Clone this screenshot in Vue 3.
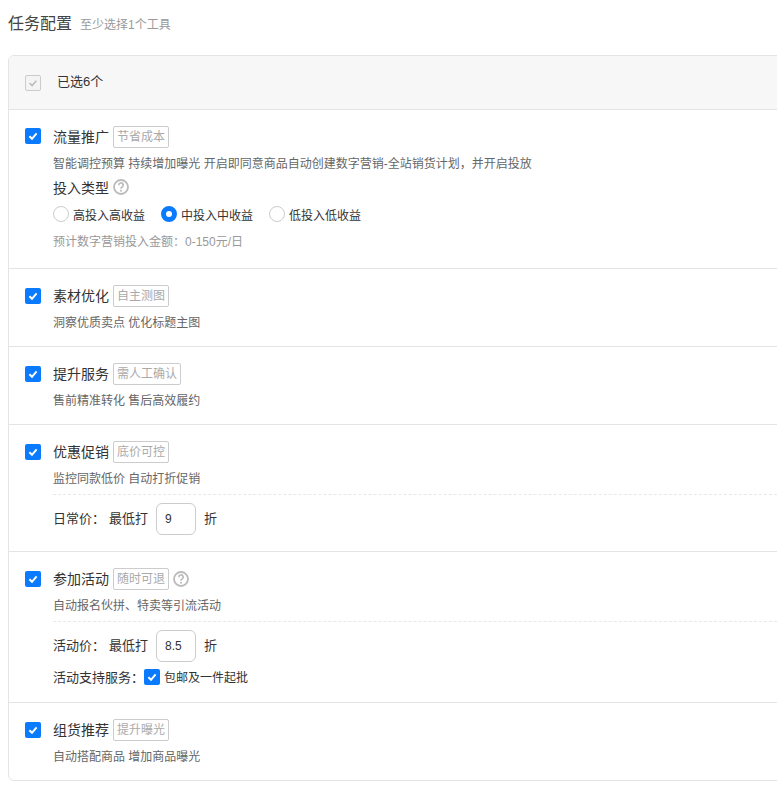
<script setup>
const radios = [
  { label: '高投入高收益', on: false },
  { label: '中投入中收益', on: true },
  { label: '低投入低收益', on: false }
]
</script>

<template>
  <div class="page">
    <div class="title-row">
      <span class="title">任务配置</span>
      <span class="subtitle">至少选择1个工具</span>
    </div>
    <div class="card">
      <div class="head">
        <span class="cb disabled">
          <svg viewBox="0 0 16 16"><path d="M4.2 8.2 7 11l4.8-5.6" fill="none" stroke="#bbb" stroke-width="1.8" /></svg>
        </span>
        <span class="head-text">已选6个</span>
      </div>

      <div class="row r1">
        <span class="cb"><svg viewBox="0 0 16 16"><path d="M4.4 8.2 7 10.8l4.6-5.4" fill="none" stroke="#fff" stroke-width="2" /></svg></span>
        <div class="body">
          <div class="name-line"><span class="name">流量推广</span><span class="tag">节省成本</span></div>
          <div class="desc">智能调控预算 持续增加曝光 开启即同意商品自动创建数字营销-全站销货计划，并开启投放</div>
          <div class="type-line">
            <span class="type">投入类型</span>
            <svg class="help" viewBox="0 0 16 16"><circle cx="8" cy="8" r="7" fill="none" stroke="#bbb" stroke-width="1.8" /><path d="M5.8 6.3A2.2 2.2 0 1 1 9.1 8.1c-.8.4-1.1.8-1.1 1.6" fill="none" stroke="#bbb" stroke-width="1.7" /><circle cx="8" cy="11.8" r="1" fill="#bbb" /></svg>
          </div>
          <div class="radios">
            <span v-for="r in radios" :key="r.label" class="radio-item">
              <span class="radio" :class="{ on: r.on }"></span>{{ r.label }}
            </span>
          </div>
          <div class="estimate">预计数字营销投入金额：0-150元/日</div>
        </div>
      </div>

      <div class="row r2">
        <span class="cb low"><svg viewBox="0 0 16 16"><path d="M4.4 8.2 7 10.8l4.6-5.4" fill="none" stroke="#fff" stroke-width="2" /></svg></span>
        <div class="body">
          <div class="name-line"><span class="name">素材优化</span><span class="tag">自主测图</span></div>
          <div class="desc">洞察优质卖点 优化标题主图</div>
        </div>
      </div>

      <div class="row r2">
        <span class="cb low"><svg viewBox="0 0 16 16"><path d="M4.4 8.2 7 10.8l4.6-5.4" fill="none" stroke="#fff" stroke-width="2" /></svg></span>
        <div class="body">
          <div class="name-line"><span class="name">提升服务</span><span class="tag">需人工确认</span></div>
          <div class="desc">售前精准转化 售后高效履约</div>
        </div>
      </div>

      <div class="row r4">
        <span class="cb low"><svg viewBox="0 0 16 16"><path d="M4.4 8.2 7 10.8l4.6-5.4" fill="none" stroke="#fff" stroke-width="2" /></svg></span>
        <div class="body">
          <div class="name-line"><span class="name">优惠促销</span><span class="tag">底价可控</span></div>
          <div class="desc">监控同款低价 自动打折促销</div>
          <div class="dashed"></div>
          <div class="price-line">
            <span class="price-label">日常价：</span><span class="price-text">最低打</span>
            <span class="input">9</span><span class="price-text">折</span>
          </div>
        </div>
      </div>

      <div class="row r5">
        <span class="cb low"><svg viewBox="0 0 16 16"><path d="M4.4 8.2 7 10.8l4.6-5.4" fill="none" stroke="#fff" stroke-width="2" /></svg></span>
        <div class="body">
          <div class="name-line">
            <span class="name">参加活动</span><span class="tag">随时可退</span>
            <svg class="help" viewBox="0 0 16 16"><circle cx="8" cy="8" r="7" fill="none" stroke="#bbb" stroke-width="1.8" /><path d="M5.8 6.3A2.2 2.2 0 1 1 9.1 8.1c-.8.4-1.1.8-1.1 1.6" fill="none" stroke="#bbb" stroke-width="1.7" /><circle cx="8" cy="11.8" r="1" fill="#bbb" /></svg>
          </div>
          <div class="desc">自动报名伙拼、特卖等引流活动</div>
          <div class="dashed"></div>
          <div class="price-line">
            <span class="price-label">活动价：</span><span class="price-text">最低打</span>
            <span class="input">8.5</span><span class="price-text">折</span>
          </div>
          <div class="service">
            <span class="service-label">活动支持服务：</span>
            <span class="cb"><svg viewBox="0 0 16 16"><path d="M4.4 8.2 7 10.8l4.6-5.4" fill="none" stroke="#fff" stroke-width="2" /></svg></span>
            <span class="service-text">包邮及一件起批</span>
          </div>
        </div>
      </div>

      <div class="row last">
        <span class="cb low"><svg viewBox="0 0 16 16"><path d="M4.4 8.2 7 10.8l4.6-5.4" fill="none" stroke="#fff" stroke-width="2" /></svg></span>
        <div class="body">
          <div class="name-line"><span class="name">组货推荐</span><span class="tag">提升曝光</span></div>
          <div class="desc">自动搭配商品 增加商品曝光</div>
        </div>
      </div>
    </div>
  </div>
</template>

<style>
html, body { margin: 0; overflow: hidden; background: #fff; }
</style>

<style scoped>
.page {
  width: 777px;
  height: 790px;
  overflow: hidden;
  padding-left: 8px;
  box-sizing: border-box;
  font-family: "Liberation Sans", "Noto Sans CJK SC", sans-serif;
  font-size: 12px;
  color: #333;
  background: #fff;
}
.title-row {
  height: 55px;
  padding-top: 13px;
  box-sizing: border-box;
  display: flex;
  align-items: baseline;
  gap: 8px;
}
.title { font-size: 16px; line-height: 22px; color: #444; }
.subtitle { font-size: 12px; color: #999; }
.card {
  width: 800px;
  height: 726px;
  box-sizing: border-box;
  border: 1px solid #e4e4e4;
  border-radius: 6px;
  overflow: hidden;
}
.head {
  height: 54px;
  box-sizing: border-box;
  background: #f7f7f7;
  border-bottom: 1px solid #e4e4e4;
  display: flex;
  align-items: center;
  padding-left: 16px;
}
.head-text { margin-left: 16px; margin-bottom: 4px; color: #333; font-size: 13px; }
.cb {
  flex: none;
  display: block;
  width: 16px;
  height: 16px;
  border-radius: 2px;
  background: #0a7aff;
}
.cb.low { margin-top: 1px; }
.cb svg { display: block; width: 16px; height: 16px; }
.cb.disabled {
  background: #f4f4f4;
  border: 1px solid #ccc;
  box-sizing: border-box;
}
.cb.disabled svg { width: 14px; height: 14px; }
.row {
  display: flex;
  align-items: flex-start;
  padding: 18px 0 0 16px;
  border-bottom: 1px solid #e4e4e4;
  box-sizing: border-box;
}
.r1 { height: 159px; }
.r2 { height: 78px; }
.r4 { height: 127px; }
.r5 { height: 151px; }
.last { height: 77px; border-bottom: 0; }
.body { flex: 1; margin-left: 12px; min-width: 0; }
.name-line { display: flex; align-items: center; height: 18px; }
.name { font-size: 14px; width: 56px; color: #333; line-height: 18px; white-space: nowrap; }
.tag {
  margin-left: 4px;
  height: 22px;
  box-sizing: border-box;
  padding: 0 3px;
  border: 1px solid #ccc;
  border-radius: 2px;
  color: #aaa;
  font-size: 12px;
  line-height: 20px;
  white-space: nowrap;
}
.desc { margin-top: 9px; line-height: 18px; color: #666; white-space: nowrap; }
.type-line { display: flex; align-items: center; margin-top: 3px; height: 22px; }
.type { font-size: 14px; color: #333; }
.help { width: 16px; height: 16px; margin-left: 4px; }
.radios { display: flex; margin-top: 5px; height: 22px; align-items: center; gap: 16px; }
.radio-item { display: flex; align-items: center; color: #333; }
.radio {
  width: 16px;
  height: 16px;
  box-sizing: border-box;
  border: 1px solid #ccc;
  border-radius: 50%;
  margin-right: 4px;
  background: #fff;
}
.radio.on { border: 5px solid #0a7aff; }
.estimate { margin-top: 8px; color: #999; line-height: 18px; }
.dashed { border-top: 1px dashed #e8e8e8; margin-top: 6px; }
.price-line { display: flex; align-items: center; margin-top: 8px; height: 32px; font-size: 13px; }
.price-label { width: 56px; margin-bottom: 4px; }
.price-text { margin-bottom: 4px; }
.input {
  width: 40px;
  height: 32px;
  box-sizing: border-box;
  border: 1px solid #ccc;
  border-radius: 6px;
  margin: 0 8px;
  padding-left: 8px;
  font-size: 12px;
  line-height: 31px;
  color: #333;
}
.service { display: flex; align-items: center; margin-top: 5px; height: 20px; }
.service-label { font-size: 13px; margin-bottom: 2px; }
.service-text { margin-left: 4px; margin-bottom: 2px; }
</style>
